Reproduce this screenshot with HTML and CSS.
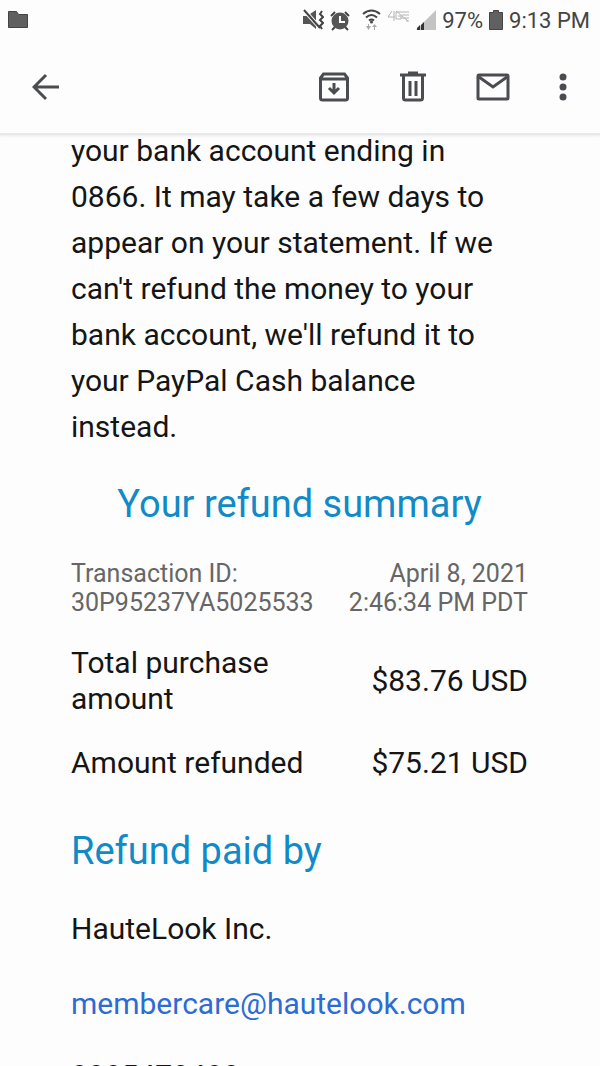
FILE: index.html
```html
<!DOCTYPE html>
<html lang="en">
<head>
<meta charset="utf-8">
<meta name="viewport" content="width=device-width, initial-scale=1">
<title>Your refund summary</title>
<link rel="stylesheet" href="styles.css">
</head>
<body>
<div class="screen">
  <header class="top">
    <div class="status">
      <svg class="folder" width="20" height="18" viewBox="0 0 20 18" aria-hidden="true"><path d="M.5.5h8l2 3h9v13H.5z" fill="#606060" stroke="#444"/></svg>
      <div class="signals">
        <svg width="21" height="22" viewBox="0 0 21 22" aria-hidden="true"><path d="M0 7h4l9-6v19l-6-5H0z" fill="#555"/><path d="M1 1l17 19" stroke="#fcfcfc" stroke-width="4"/><path d="M1 1l16 18" stroke="#444" stroke-width="2"/><path d="M19 2l-2 3 3 3-3 3 3 3-3 3 2 3" fill="none" stroke="#444" stroke-width="2"/></svg>
        <svg width="20" height="21" viewBox="0 0 20 21" aria-hidden="true"><path d="M5 17l-3 3M15 17l3 3" stroke="#444" stroke-width="2"/><path d="M1 6l4-4M19 6l-4-4" stroke="#444" stroke-width="2"/><circle cx="10" cy="11" r="8.500" fill="#555"/><path d="M10 6v6h5" fill="none" stroke="#fff" stroke-width="2"/></svg>
        <svg class="wifi" width="19" height="22" viewBox="0 0 19 22" aria-hidden="true"><path d="M1 5q8.500-7 17 0M4 8.500q5.500-5 11 0M7 11.500q2.500-2 5 0" fill="none" stroke="#444" stroke-width="2"/><circle cx="9.500" cy="13" r="1.500" fill="#444"/><path d="M4 17h2v-2h1v2h2l-2.500 4zM10 18l2.500-3 2.500 3h-2v3h-1v-3z" fill="#aaa"/></svg>
        <svg class="lte" width="23" height="13" viewBox="0 0 23 13" aria-hidden="true"><path d="M5 1L1 7h7M7 1v10M14 2H9v7h5V6h-3M14 2h8M15 5h7M14 8h8M19 11h3M9 1l12 10" fill="none" stroke="#b4b4b4"/></svg>
        <svg width="20" height="20" viewBox="0 0 20 20" aria-hidden="true"><path d="M20 0v20H0z" fill="#c4c4c4"/><path d="M1 20v-2l3-3v5zM5 20v-5l3-3v8z" fill="#333"/></svg>
        <span class="battery-text">97%</span>
        <svg class="battery" width="14" height="20" viewBox="0 0 14 20" aria-hidden="true"><path d="M.5 2.500h4v-2h5v2h4v17H.5z" fill="#606060" stroke="#444"/></svg>
        <time>9:13 PM</time>
      </div>
    </div>
    <nav class="toolbar" aria-label="Message actions">
      <button class="back" aria-label="Back"><svg width="28" height="28" viewBox="0 0 28 28"><path d="M27 14H3M14 2L2 14l12 12"/></svg></button>
      <button aria-label="Archive"><svg width="32" height="32" viewBox="0 0 32 32"><path d="M2.500 7l3-4h21l3 4v20q0 2-2 2h-23q-2 0-2-2zM2.500 8h27M16 12v10M11 17l5 5 5-5"/></svg></button>
      <button aria-label="Delete"><svg width="28" height="32" viewBox="0 0 28 32"><path d="M1 4h26M9 2h10M4.500 5v22q0 2 2 2h15q2 0 2-2V5M11 10v15M17 10v15"/></svg></button>
      <button aria-label="Mark unread"><svg width="34" height="28" viewBox="0 0 34 28"><rect x="2" y="2" width="30" height="24" rx="1"/><path d="M3 4l14 10L31 4"/></svg></button>
      <button class="more" aria-label="More options"><svg width="8" height="28" viewBox="0 0 8 28"><circle cx="4" cy="4" r="3.500"/><circle cx="4" cy="14" r="3.500"/><circle cx="4" cy="24" r="3.500"/></svg></button>
    </nav>
  </header>
  <main class="message">
    <p class="intro">your bank account ending in 0866. It may take a few days to appear on your statement. If we can't refund the money to your bank account, we'll refund it to your PayPal Cash balance instead.</p>
    <h1 class="summary-title">Your refund summary</h1>
    <div class="meta">
      <p>Transaction ID:<br>30P95237YA5025533</p>
      <p class="date">April 8, 2021<br>2:46:34 PM PDT</p>
    </div>
    <table class="amounts">
      <tr><th scope="row">Total purchase amount</th><td>$83.76 USD</td></tr>
      <tr><th scope="row">Amount refunded</th><td>$75.21 USD</td></tr>
    </table>
    <h2 class="paid-title">Refund paid by</h2>
    <p class="contact">HauteLook Inc.</p>
    <p class="contact"><a href="mailto:membercare@hautelook.com">membercare@hautelook.com</a></p>
    <p class="contact phone">8885478488</p>
  </main>
</div>
</body>
</html>
```
FILE: styles.css
```css
* { box-sizing: border-box; }
body, p, h1, h2 { margin: 0; }
body {
  background: #fdfdfd;
  color: #151515;
  font-family: Roboto, "Liberation Sans", sans-serif;
}
.screen {
  height: 100vh;
  overflow: hidden;
  display: flex;
  flex-direction: column;
}
.top {
  flex: none;
  border-bottom: 2px solid #e6e8ea;
  box-shadow: 0 1px 3px #e8eaec;
}
.status {
  height: 40px;
  padding: 0 10px 0 8px;
  display: flex;
  align-items: center;
  justify-content: space-between;
}
.signals {
  display: flex;
  align-items: center;
  gap: 6px;
  color: #444;
  font-size: 22px;
}
.signals svg { flex: none; }
.signals .wifi { margin-left: 6px; }
.signals .lte { margin-bottom: 8px; }
.toolbar {
  height: 93px;
  padding: 0 33px 0 32px;
  display: flex;
  align-items: center;
  gap: 49px;
}
.toolbar button {
  display: flex;
  padding: 0;
  border: 0;
  background: none;
}
.toolbar .back { margin-right: auto; }
.toolbar svg {
  fill: none;
  stroke: #4b4c50;
  stroke-width: 3;
}
.toolbar .more svg { fill: #4b4c50; stroke: none; }
.message {
  flex: 1;
  min-height: 0;
  padding: 0 72px 0 71px;
}
.intro {
  margin-top: -7px;
  padding-right: 16px;
  font-size: 30px;
  line-height: 46px;
}
.summary-title, .paid-title {
  color: #118ac8;
  font-size: 38px;
  font-weight: 400;
  line-height: 48px;
}
.summary-title { margin-top: 30px; text-align: center; }
.meta {
  margin-top: 31px;
  display: flex;
  justify-content: space-between;
  color: #666;
  font-size: 25px;
  line-height: 29px;
}
.date { text-align: right; }
.amounts {
  width: 100%;
  margin-top: 14px;
  border-collapse: collapse;
  font-size: 30px;
  line-height: 36px;
}
.amounts th, .amounts td { padding: 14px 0; }
.amounts th { font-weight: 400; text-align: left; }
.amounts td { text-align: right; white-space: nowrap; }
.paid-title { margin: 32px 0 31px; }
.contact {
  margin-top: 29px;
  font-size: 30px;
  line-height: 46px;
}
.contact.phone { margin-top: 26px; }
.contact a { color: #2d6cd3; text-decoration: none; }
```
